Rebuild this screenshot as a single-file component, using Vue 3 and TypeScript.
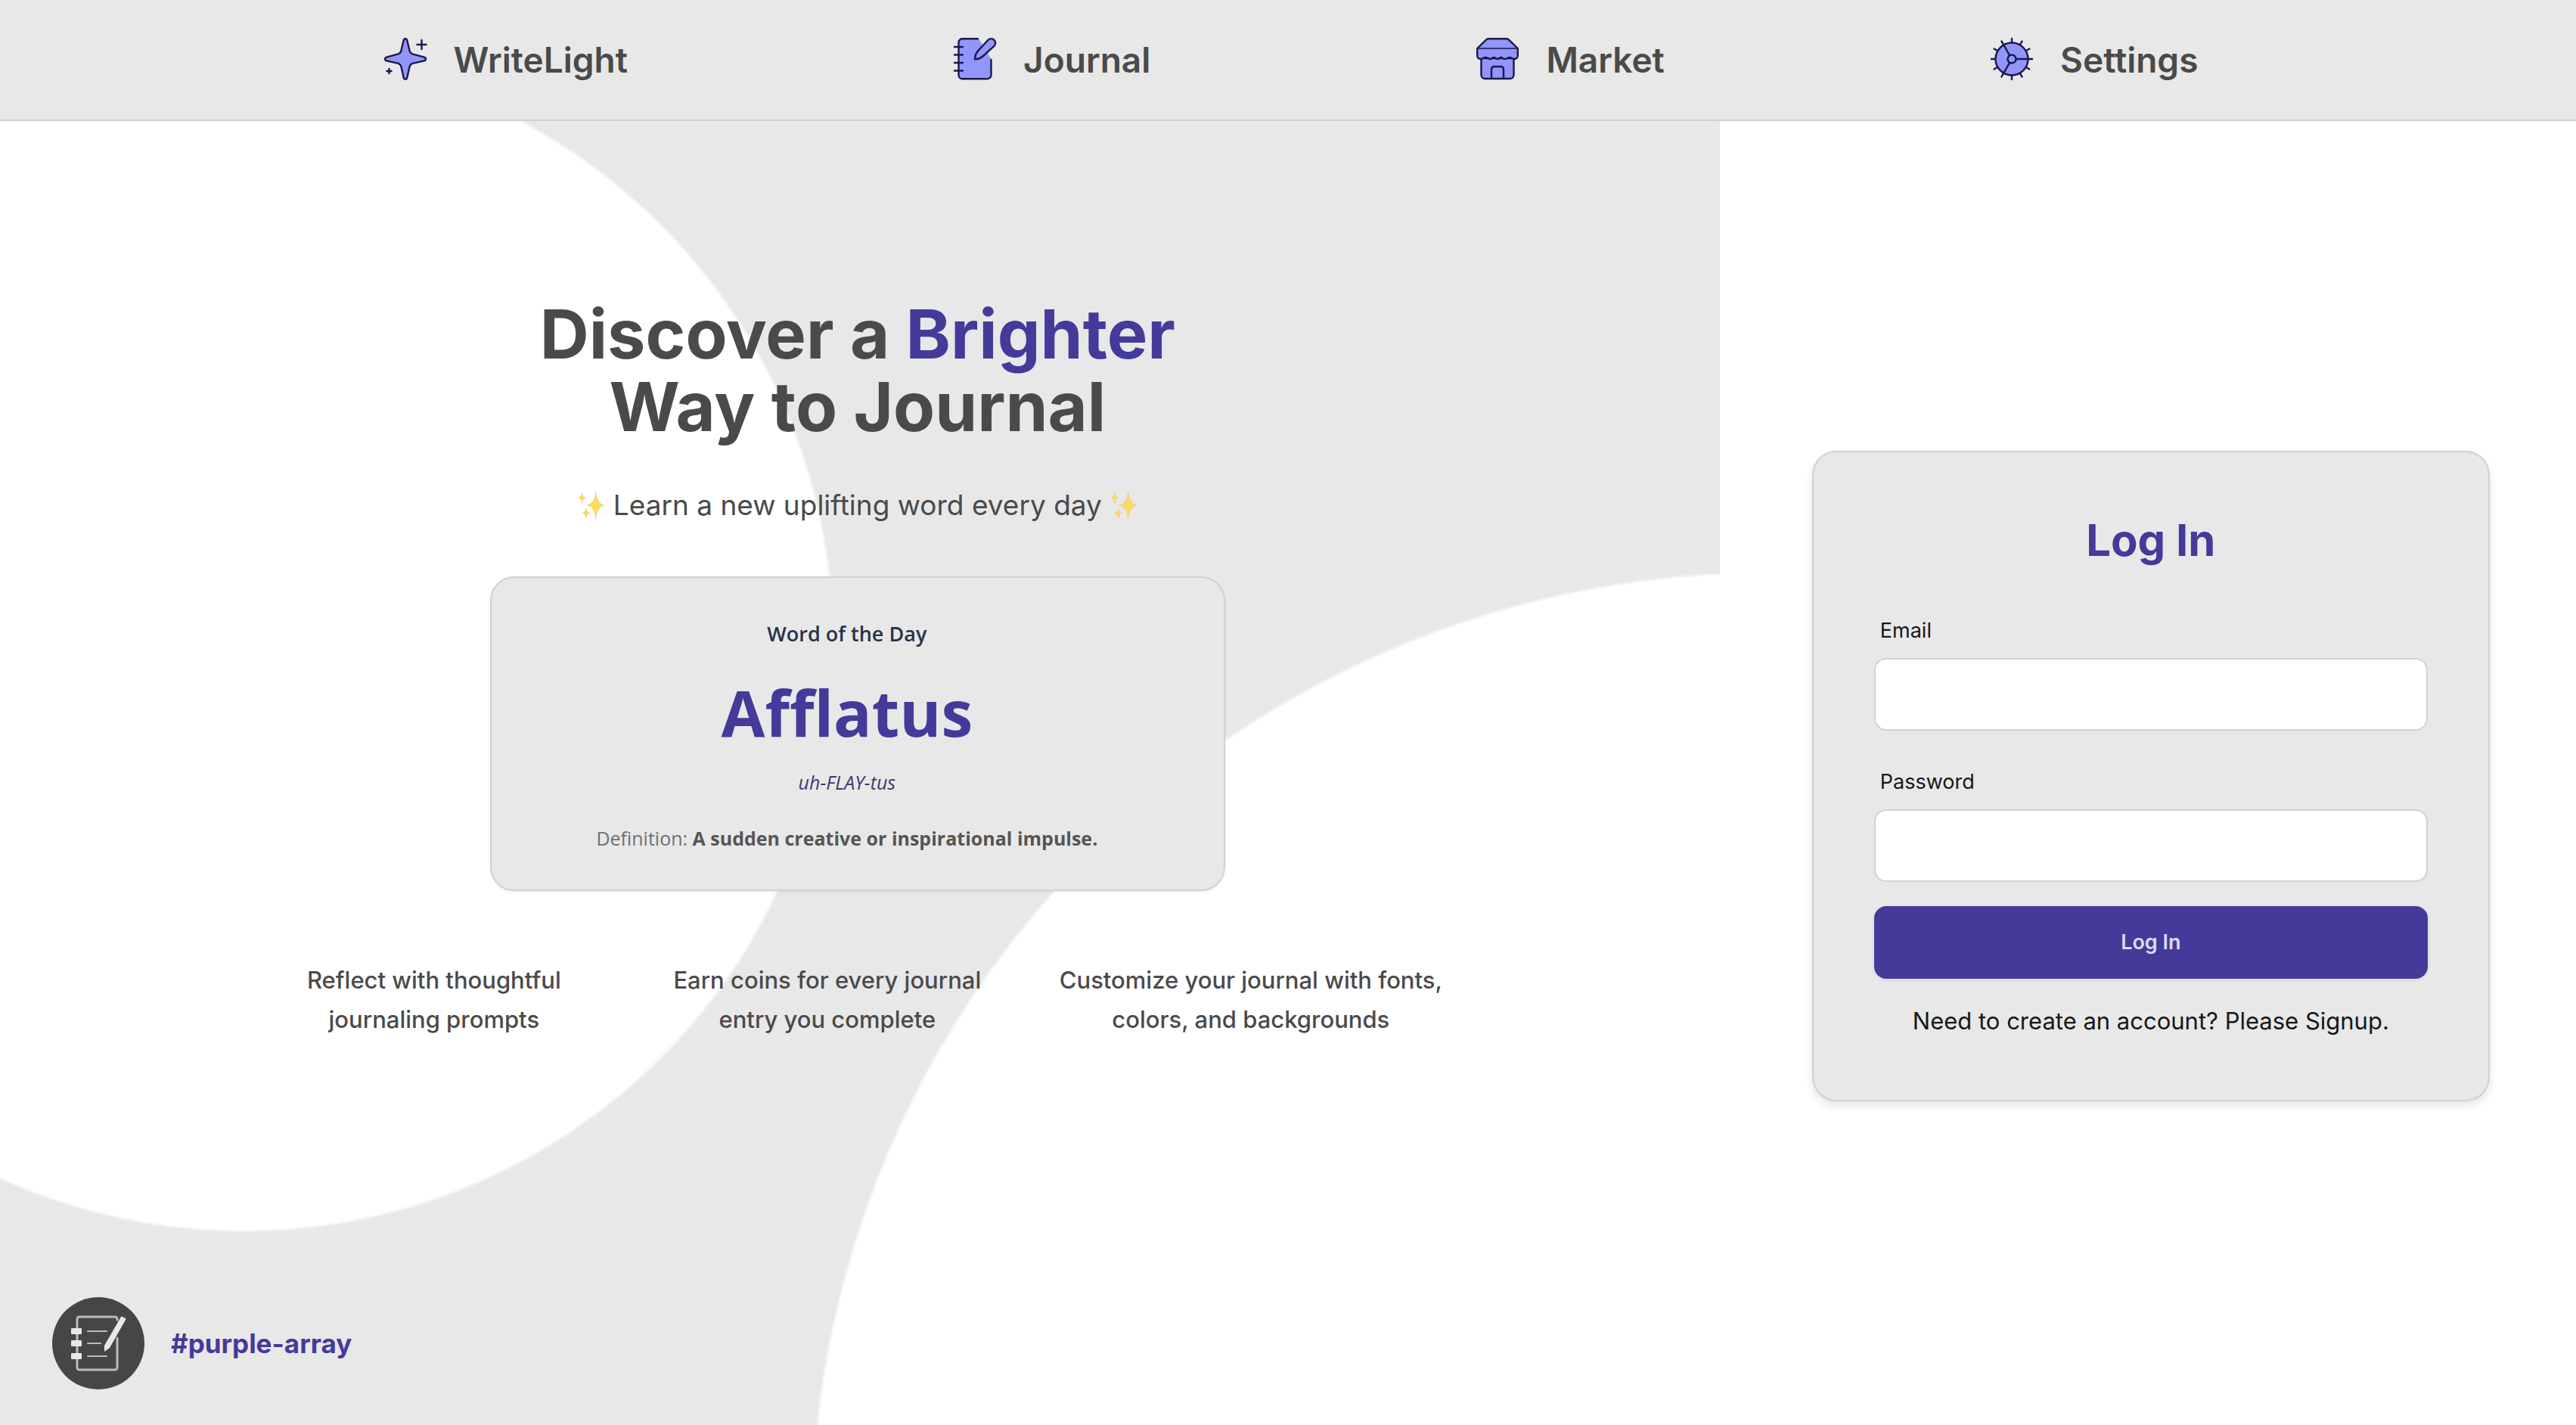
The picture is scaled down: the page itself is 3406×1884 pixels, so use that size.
<script setup lang="ts">
import { ref } from 'vue'

type IconName = 'sparkle' | 'notebook' | 'store' | 'cog'

interface NavItem {
  label: string
  icon: IconName
}

const navItems: NavItem[] = [
  { label: 'WriteLight', icon: 'sparkle' },
  { label: 'Journal', icon: 'notebook' },
  { label: 'Market', icon: 'store' },
  { label: 'Settings', icon: 'cog' },
]

const features: string[][] = [
  ['Reflect with thoughtful', 'journaling prompts'],
  ['Earn coins for every journal', 'entry you complete'],
  ['Customize your journal with fonts,', 'colors, and backgrounds'],
]

const cogTeeth: number[] = Array.from({ length: 12 }, (_, i) => i * 30)
const cogSpokes: number[] = [90, 210, 330]

const email = ref('')
const password = ref('')
</script>

<template>
  <div class="page">
    <header class="header">
      <nav class="nav">
        <a v-for="item in navItems" :key="item.label" href="#" class="nav-link">
          <svg class="nav-icon" viewBox="0 0 56 56" aria-hidden="true">
            <template v-if="item.icon === 'sparkle'">
              <path
                class="fill"
                d="M28 1.2c-1.3 0-2 .8-2.3 2L22.6 16.5c-.6 2.6-2.2 4.600-4.900 5.200L3 25.700c-2.600.6-2.600 4 0 4.600l14.700 3.300c2.700.6 4.300 2.600 4.900 5.200l3.100 14c.6 2.600 4 2.600 4.600 0l3.100-14c.6-2.600 2.200-4.600 4.900-5.200L53 30.300c2.600-.6 2.600-4 0-4.600l-14.700-4c-2.700-.6-4.300-2.600-4.900-5.200L30.300 3.200c-.3-1.200-1-2-2.300-2z"
              />
              <path d="M49.5 3v12M43.5 9h12M6.5 41v6M3.5 44h6" />
            </template>
            <template v-else-if="item.icon === 'notebook'">
              <path
                class="shape"
                d="M33 1H11a5 5 0 0 0-5 5v44a5 5 0 0 0 5 5h34a5 5 0 0 0 5-5V29z"
              />
              <path
                d="M32 1.2H11.5a5 5 0 0 0-5 5v43a5 5 0 0 0 5 5h33a5 5 0 0 0 5-5V29M1 12h11M1 22.5h11M1 33h11M1 43.5h11"
              />
              <path
                class="fill"
                d="M45.5 2.800a5.600 5.600 0 0 1 8 8L37.800 25c-2.700 2.300-5.800 3.300-9.800 3.300.3-4.700 1.300-7.900 3.800-10.700z"
              />
            </template>
            <template v-else-if="item.icon === 'store'">
              <path class="fill" d="M6.5 27v22a5 5 0 0 0 5 5h33a5 5 0 0 0 5-5V27z" />
              <path
                class="fill"
                d="M16 1.2h24c1 0 1.800.4 2.500 1L54.800 14v9.500a4.500 4.500 0 0 1-4.300 4.500c-3 0-3.500-2-6.500-2s-3.500 2-6.500 2-2.500-2-4.800-2-2.700 2-4.700 2-2.400-2-4.700-2-2.800 2-4.800 2-3.500-2-6.500-2-3.500 2-6.500 2A4.500 4.500 0 0 1 1.200 23.500V14L13.500 2.200c.7-.6 1.500-1 2.500-1z"
              />
              <path class="thin" d="M2 14h52" />
              <path d="M20 54V42c0-2.500 1.500-4 4-4h8c2.500 0 4 1.500 4 4v12" />
            </template>
            <template v-else>
              <circle class="fill" cx="28" cy="28" r="21.5" />
              <path
                v-for="angle in cogTeeth"
                :key="`tooth-${angle}`"
                d="M28 6V1"
                :transform="`rotate(${angle} 28 28)`"
              />
              <path
                v-for="angle in cogSpokes"
                :key="`spoke-${angle}`"
                d="M28 22V6"
                :transform="`rotate(${angle} 28 28)`"
              />
              <circle cx="28" cy="28" r="5.5" />
            </template>
          </svg>
          <span class="nav-label">{{ item.label }}</span>
        </a>
      </nav>
    </header>

    <main class="main">
      <section class="hero">
        <h1 class="title">Discover a <em>Brighter</em><br />Way to Journal</h1>

        <p class="subtitle">
          <svg class="sparkles" viewBox="0 0 40 40" aria-hidden="true">
            <path d="M26 1Q27 18 38 20Q27 22 26 39Q25 22 14 20Q25 18 26 1z" />
            <path d="M7 2Q7.5 8.5 12 9.5Q7.5 10.5 7 17Q6.5 10.5 2 9.5Q6.5 8.5 7 2z" />
            <path d="M12.5 24Q13 30 17.5 31Q13 32 12.5 38Q12 32 7.5 31Q12 30 12.5 24z" />
          </svg>
          <span>Learn a new uplifting word every day</span>
          <svg class="sparkles" viewBox="0 0 40 40" aria-hidden="true">
            <path d="M26 1Q27 18 38 20Q27 22 26 39Q25 22 14 20Q25 18 26 1z" />
            <path d="M7 2Q7.5 8.5 12 9.5Q7.5 10.5 7 17Q6.5 10.5 2 9.5Q6.5 8.5 7 2z" />
            <path d="M12.5 24Q13 30 17.5 31Q13 32 12.5 38Q12 32 7.5 31Q12 30 12.5 24z" />
          </svg>
        </p>

        <article class="word-card">
          <h2 class="word-heading">Word of the Day</h2>
          <p class="word">Afflatus</p>
          <p class="pronunciation">uh-FLAY-tus</p>
          <p class="definition">
            Definition: <strong>A sudden creative or inspirational impulse.</strong>
          </p>
        </article>

        <ul class="features">
          <li v-for="lines in features" :key="lines[0]">{{ lines[0] }}<br />{{ lines[1] }}</li>
        </ul>

        <footer class="footer">
          <svg class="logo" viewBox="0 0 122 122" aria-hidden="true">
            <circle cx="61" cy="61" r="61" fill="#454746" />
            <g fill="none" stroke="#b9bdbb" stroke-width="3" stroke-linecap="round">
              <path d="M86 30v-1a3 3 0 0 0-3-3H36a3 3 0 0 0-3 3v64a3 3 0 0 0 3 3h47a3 3 0 0 0 3-3V54" />
              <path d="M47 45h25M47 61h17M47 78h25" stroke-width="2" />
            </g>
            <g fill="#e8e8e8">
              <rect x="25" y="41" width="14" height="8" rx="1" />
              <rect x="25" y="57" width="14" height="8" rx="1" />
              <rect x="25" y="74" width="14" height="8" rx="1" />
              <path d="M91 26q1-1 2 0l4 2q1 1 0 2L76 67l-7 5v-8z" />
            </g>
          </svg>
          <a href="#" class="tag">#purple-array</a>
        </footer>
      </section>

      <section class="side">
        <form class="login" @submit.prevent>
          <h2 class="login-title">Log In</h2>
          <div class="field">
            <label for="email">Email</label>
            <input id="email" v-model="email" type="email" />
          </div>
          <div class="field">
            <label for="password">Password</label>
            <input id="password" v-model="password" type="password" />
          </div>
          <button type="submit" class="submit">Log In</button>
          <p class="signup">Need to create an account? Please <a href="#">Signup.</a></p>
        </form>
      </section>
    </main>
  </div>
</template>

<style>
body {
  margin: 0;
  background: #fff;
}
</style>

<style scoped>
.page {
  display: flex;
  flex-direction: column;
  min-height: 100vh;
  font-family: Inter, 'Liberation Sans', sans-serif;
  color: #4a4a4a;
}

h1,
h2,
p,
ul {
  margin: 0;
  padding: 0;
}

a {
  color: inherit;
  text-decoration: none;
}

.header {
  background: #e8e8e8;
  border-bottom: 2px solid #d1d1d1;
}

.nav {
  display: flex;
  justify-content: space-around;
  padding: 47px 284px 49px 292px;
}

.nav-link {
  display: flex;
  align-items: center;
  gap: 36px;
  font-size: 46px;
  line-height: 60px;
  font-weight: 600;
}

.nav-label {
  padding-top: 2px;
}

.nav-icon {
  width: 56px;
  height: 56px;
  fill: none;
  stroke: #1d174d;
  stroke-width: 2.4;
  stroke-linecap: round;
  stroke-linejoin: round;
  overflow: visible;
}

.nav-icon .fill {
  fill: #9196fb;
}

.nav-icon .shape {
  fill: #9196fb;
  stroke: none;
}

.nav-icon .thin {
  stroke-width: 1.5;
}

.main {
  flex: 1;
  display: grid;
  grid-template-columns: calc(100% * 2 / 3 + 3px) 1fr;
}

.hero {
  display: flex;
  flex-direction: column;
  align-items: center;
  padding: 234px 6px 0 0;
  background:
    radial-gradient(circle at 322px 688px, #fff 777px, transparent 782px),
    radial-gradient(circle at 2334px 1858px, #fff 1258px, transparent 1263px),
    #e8e8e8;
}

.title {
  font-size: 90px;
  line-height: 96px;
  font-weight: 700;
  text-align: center;
}

.title em {
  font-style: normal;
  color: #443a9a;
}

.subtitle {
  display: flex;
  align-items: center;
  gap: 10px;
  margin-top: 54px;
  font-size: 37px;
  line-height: 56px;
}

.sparkles {
  width: 38px;
  height: 38px;
  fill: #fbdc5c;
  stroke: #f3c067;
  stroke-width: 0.6;
}

.word-card {
  box-sizing: border-box;
  width: 972px;
  margin-top: 66px;
  padding: 50px 28px 44px 0;
  border: 2px solid #d1d1d1;
  border-radius: 32px;
  background: #e8e8e8;
  box-shadow: 0 2px 4px rgba(0, 0, 0, 0.06);
  font-family: 'Open Sans', 'Noto Sans', sans-serif;
  text-align: center;
}

.word-heading {
  font-size: 27px;
  line-height: 48px;
  font-weight: 600;
  color: #28324a;
}

.word {
  margin-top: 24px;
  font-size: 84px;
  line-height: 112px;
  font-weight: 700;
  color: #443a9a;
}

.pronunciation {
  margin-top: 16px;
  font-size: 25px;
  line-height: 40px;
  font-style: italic;
  color: #43366f;
}

.definition {
  margin-top: 30px;
  font-size: 25px;
  line-height: 48px;
  color: #707070;
}

.definition strong {
  font-weight: 700;
  color: #555;
}

.features {
  display: grid;
  grid-template-columns: 480px 560px 560px;
  margin-top: 92px;
  list-style: none;
  font-size: 31px;
  line-height: 52px;
  font-weight: 500;
  text-align: center;
}

.footer {
  display: flex;
  align-items: center;
  align-self: stretch;
  gap: 35px;
  margin-top: auto;
  padding: 0 0 47px 69px;
}

.logo {
  width: 122px;
  height: 122px;
}

.tag {
  font-size: 35px;
  line-height: 48px;
  font-weight: 700;
  color: #443a9a;
}

.side {
  display: flex;
  align-items: center;
  justify-content: center;
  padding: 8px 0 0 8px;
}

.login {
  box-sizing: border-box;
  display: flex;
  flex-direction: column;
  width: 896px;
  padding: 80px;
  border: 2px solid #d1d1d1;
  border-radius: 32px;
  background: #e8e8e8;
  box-shadow: 0 6px 12px rgba(0, 0, 0, 0.1);
  color: #171717;
}

.login-title {
  margin-bottom: 64px;
  font-size: 58px;
  line-height: 72px;
  font-weight: 700;
  text-align: center;
  color: #443a9a;
}

.field {
  display: flex;
  flex-direction: column;
  gap: 16px;
}

.field + .field {
  margin-top: 48px;
}

.field label {
  padding-left: 8px;
  font-size: 27px;
  line-height: 40px;
}

.field input {
  box-sizing: border-box;
  width: 100%;
  height: 96px;
  padding: 0 24px;
  border: 2px solid #d1d1d1;
  border-radius: 16px;
  background: #fff;
  font: inherit;
  font-size: 27px;
}

.submit {
  height: 96px;
  margin-top: 32px;
  padding: 0;
  border: 0;
  border-radius: 16px;
  background: #443a9a;
  box-shadow: 0 2px 4px rgba(0, 0, 0, 0.08);
  font-family: inherit;
  font-size: 27px;
  line-height: 40px;
  font-weight: 600;
  color: #dcdaf3;
}

.signup {
  margin-top: 32px;
  font-size: 31px;
  line-height: 48px;
  text-align: center;
}
</style>
